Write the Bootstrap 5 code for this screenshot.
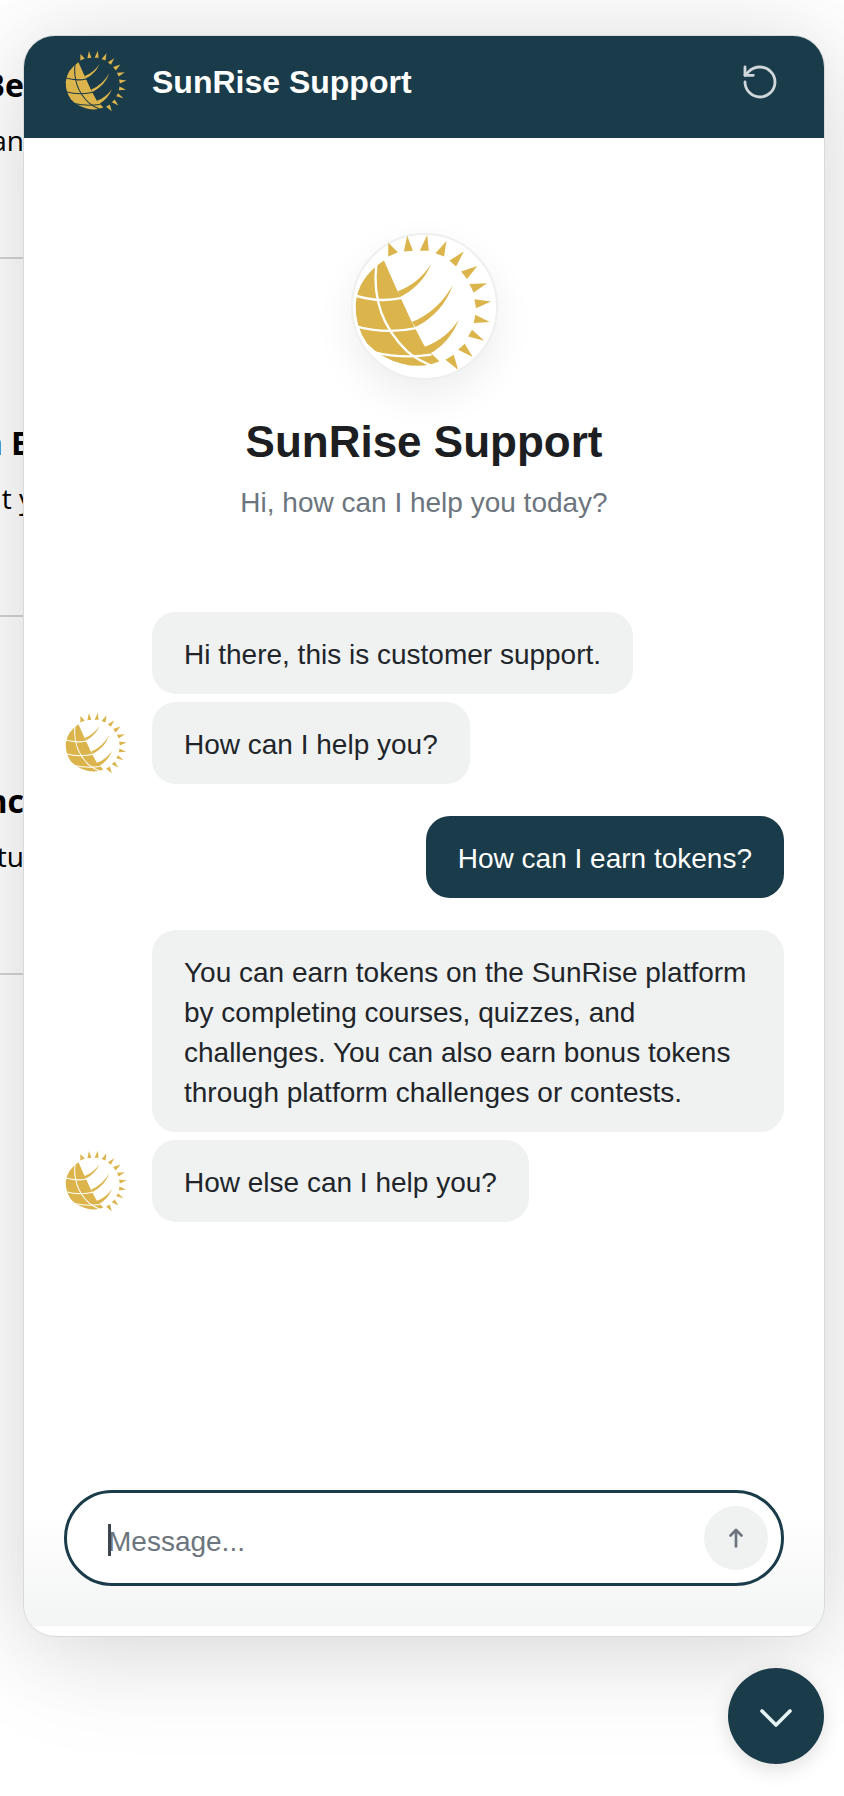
<!DOCTYPE html>
<html lang="en">
<head>
<meta charset="utf-8">
<title>SunRise Support</title>
<link rel="stylesheet" href="https://cdn.jsdelivr.net/npm/bootstrap@5.3.0/dist/css/bootstrap.min.css">
<style>
html,body{height:1796px;overflow:hidden;background:#fff;}
body{font-family:"Liberation Sans",Arial,sans-serif;color:#212529;position:relative;}
.bg-list{width:24px;overflow:hidden;margin-top:-99px;font-family:"Open Sans",sans-serif;color:#000;}
.bg-row{height:358px;border-bottom:2px solid #d3d4d4;padding-top:164px;display:flex;flex-direction:column;align-items:flex-end;white-space:nowrap;}
.bg-head{font-size:32px;font-weight:700;line-height:40px;}
.bg-text{font-size:28px;line-height:40px;margin-top:15px;}
.clip-head{margin-right:-5px;}
.clip-text{margin-right:-9px;}
.chat-panel{position:absolute;left:23px;top:35px;width:802px;height:1602px;border-radius:32px;border:1px solid #d8d9d9;background:#fff;overflow:hidden;box-shadow:0 0 90px rgba(0,0,0,.1),0 30px 110px rgba(0,0,0,.08);}
.chat-head{height:103px;background:#1a3b49;color:#fff;padding:0 40px 10px 41px;border:0;border-radius:0;margin:-1px -1px 0;}
.slot{width:64px;flex:none;display:flex;justify-content:center;}
.logo-sm{width:62px;height:62px;display:block;}
.chat-head .logo-sm{margin-bottom:2px;}
.head-title{font-size:32px;font-weight:700;line-height:40px;margin:0 0 0 24px;}
.reset-btn{padding:0;border:0;background:none;line-height:0;color:#cfd7da;margin-right:5px;}
.reset-btn svg{width:40px;height:40px;}
.intro{padding-top:95px;}
.logo-ring{width:147px;height:147px;border-radius:50%;background:#fff;border:2px solid #eeefef;box-shadow:0 16px 40px rgba(0,0,0,.07);}
.logo-lg{width:138px;height:137px;display:block;margin:0 2px 8px 0;}
.intro-title{font-size:44px;font-weight:700;line-height:52px;margin:36px 0 0;color:#1c1e21;}
.intro-sub{font-size:28px;line-height:36px;margin:17px 0 0;color:#6c757d;}
.chat-list{padding:0 40px;margin-top:91px;}
.msg-row{gap:24px;}
.msg-row+.msg-row{margin-top:8px;}
.msg-row.spaced{margin-top:32px;}
.bubble{font-size:28px;line-height:40px;padding:23px 32px 19px;border-radius:24px;background:#f0f2f2;color:#212529;}
.bubble.mine{background:#1a3b49;color:#fff;}
.bubble.wide{width:632px;}
.chat-foot{margin-top:auto;padding:50px 40px 40px;margin-bottom:10px;overflow:hidden;background:linear-gradient(to bottom,#fff 40%,#f3f4f4 100%);border:0;border-radius:0;}
.input-shell{height:96px;border:3.5px solid #1a3b49;border-radius:48px;padding:0 13px 0 41px;background:#fff;position:relative;}
.input-shell::before{content:"";position:absolute;left:41px;top:31px;width:3px;height:32px;background:#3d4650;}
.msg-input{border:0;padding:7px 0 0 0;font-size:28px;font-family:inherit;background:transparent;box-shadow:none;color:#212529;}
.msg-input::placeholder{color:#6c757d;opacity:1;}
.send-btn{width:64px;height:64px;flex:none;border-radius:50%;background:#f0f2f2;border:0;padding:0;color:#6c757d;}
.fab{position:absolute;left:728px;top:1668px;width:96px;height:96px;border-radius:50%;background:#1a3b49;border:0;padding:0;color:#e6f4f6;box-shadow:0 6px 20px rgba(0,0,0,.12);}
</style>
</head>
<body>
<svg width="0" height="0" class="position-absolute" aria-hidden="true">
  <defs>
    <mask id="globeCut" maskUnits="userSpaceOnUse" x="0" y="0" width="510" height="510">
      <path fill="#fff" d="M135 122 L175 212 L218 305 L256 377 Q280 405 302 425 Q250 448 190 432 Q130 418 85 372 Q48 320 50 255 Q55 175 135 122Z"/>
      <path fill="#fff" d="M177 214 Q238 192 276 134 Q250 198 183 232Z"/>
      <path fill="#fff" d="M219 307 Q300 272 342 195 Q314 278 230 322Z"/>
      <path fill="#fff" d="M258 381 Q322 358 360 300 Q334 368 272 403Z"/>
      <g fill="none" stroke="#000" stroke-width="7">
        <path d="M45 226 Q120 250 190 234"/>
        <path d="M45 318 Q140 345 236 324"/>
        <path d="M105 398 Q190 418 278 405"/>
        <path d="M112 135 Q95 290 205 395 Q240 425 290 442"/>
      </g>
    </mask>
    <symbol id="sunLogo" viewBox="45 42 415 412">
      <rect x="0" y="0" width="510" height="510" fill="#dbb44b" mask="url(#globeCut)"/>
      <g fill="#dbb44b">
        <polygon points="148,68 177,97 148,110"/>
        <polygon points="205,47 222,92 195,95"/>
        <polygon points="265,45 270,92 243,92"/>
        <polygon points="323,63 316,110 290,100"/>
        <polygon points="375,95 352,140 332,122"/>
        <polygon points="416,138 385,177 367,155"/>
        <polygon points="445,190 405,218 392,192"/>
        <polygon points="457,245 412,265 407,238"/>
        <polygon points="453,307 405,310 410,285"/>
        <polygon points="437,363 388,350 400,330"/>
        <polygon points="402,412 358,390 378,372"/>
        <polygon points="358,450 320,420 345,405"/>
      </g>
    </symbol>
  </defs>
</svg>

<div class="bg-list">
  <div class="bg-row"><div class="bg-head">Be</div><div class="bg-text">an</div></div>
  <div class="bg-row"><div class="bg-head clip-head">n E</div><div class="bg-text clip-text">t y</div></div>
  <div class="bg-row"><div class="bg-head">nc</div><div class="bg-text">tu</div></div>
</div>

<div class="card chat-panel">
  <div class="card-header chat-head d-flex align-items-center">
    <div class="slot"><svg class="logo-sm"><use href="#sunLogo"/></svg></div>
    <h1 class="head-title">SunRise Support</h1>
    <button class="reset-btn ms-auto" type="button" aria-label="Restart">
      <svg viewBox="0 0 24 24" fill="none" stroke="currentColor" stroke-width="1.7" stroke-linecap="round" stroke-linejoin="round"><path d="M3 12a9 9 0 1 0 9-9 9.75 9.75 0 0 0-6.74 2.74L3 8"/><path d="M3 3v5h5"/></svg>
    </button>
  </div>
  <div class="intro d-flex flex-column align-items-center text-center">
    <div class="logo-ring d-flex align-items-center justify-content-center"><svg class="logo-lg"><use href="#sunLogo"/></svg></div>
    <h2 class="intro-title">SunRise Support</h2>
    <p class="intro-sub">Hi, how can I help you today?</p>
  </div>
  <div class="chat-list">
    <div class="msg-row d-flex align-items-center"><div class="slot"></div><div class="bubble">Hi there, this is customer support.</div></div>
    <div class="msg-row d-flex align-items-center"><div class="slot"><svg class="logo-sm"><use href="#sunLogo"/></svg></div><div class="bubble">How can I help you?</div></div>
    <div class="msg-row spaced d-flex justify-content-end"><div class="bubble mine">How can I earn tokens?</div></div>
    <div class="msg-row spaced d-flex align-items-center"><div class="slot"></div><div class="bubble wide">You can earn tokens on the SunRise platform by completing courses, quizzes, and challenges. You can also earn bonus tokens through platform challenges or contests.</div></div>
    <div class="msg-row d-flex align-items-center"><div class="slot"><svg class="logo-sm"><use href="#sunLogo"/></svg></div><div class="bubble">How else can I help you?</div></div>
  </div>
  <div class="card-footer chat-foot">
    <div class="input-shell d-flex align-items-center">
      <input class="form-control msg-input" type="text" placeholder="Message..." aria-label="Message">
      <button class="send-btn d-flex align-items-center justify-content-center" type="button" aria-label="Send">
        <svg width="24" height="24" viewBox="0 0 24 24" fill="none" stroke="currentColor" stroke-width="2.7" stroke-linecap="round" stroke-linejoin="round"><path d="M12 20.5V4"/><path d="M6.5 9.5L12 4l5.5 5.5"/></svg>
      </button>
    </div>
  </div>
</div>

<button class="fab d-flex align-items-center justify-content-center" type="button" aria-label="Close chat">
  <svg width="36" height="26" viewBox="0 0 36 26" fill="none" stroke="currentColor" stroke-width="3.6" stroke-linecap="round" stroke-linejoin="round"><path d="M4 8l14 14L32 8"/></svg>
</button>
<script src="https://cdn.jsdelivr.net/npm/bootstrap@5.3.0/dist/js/bootstrap.bundle.min.js"></script>
</body>
</html>
